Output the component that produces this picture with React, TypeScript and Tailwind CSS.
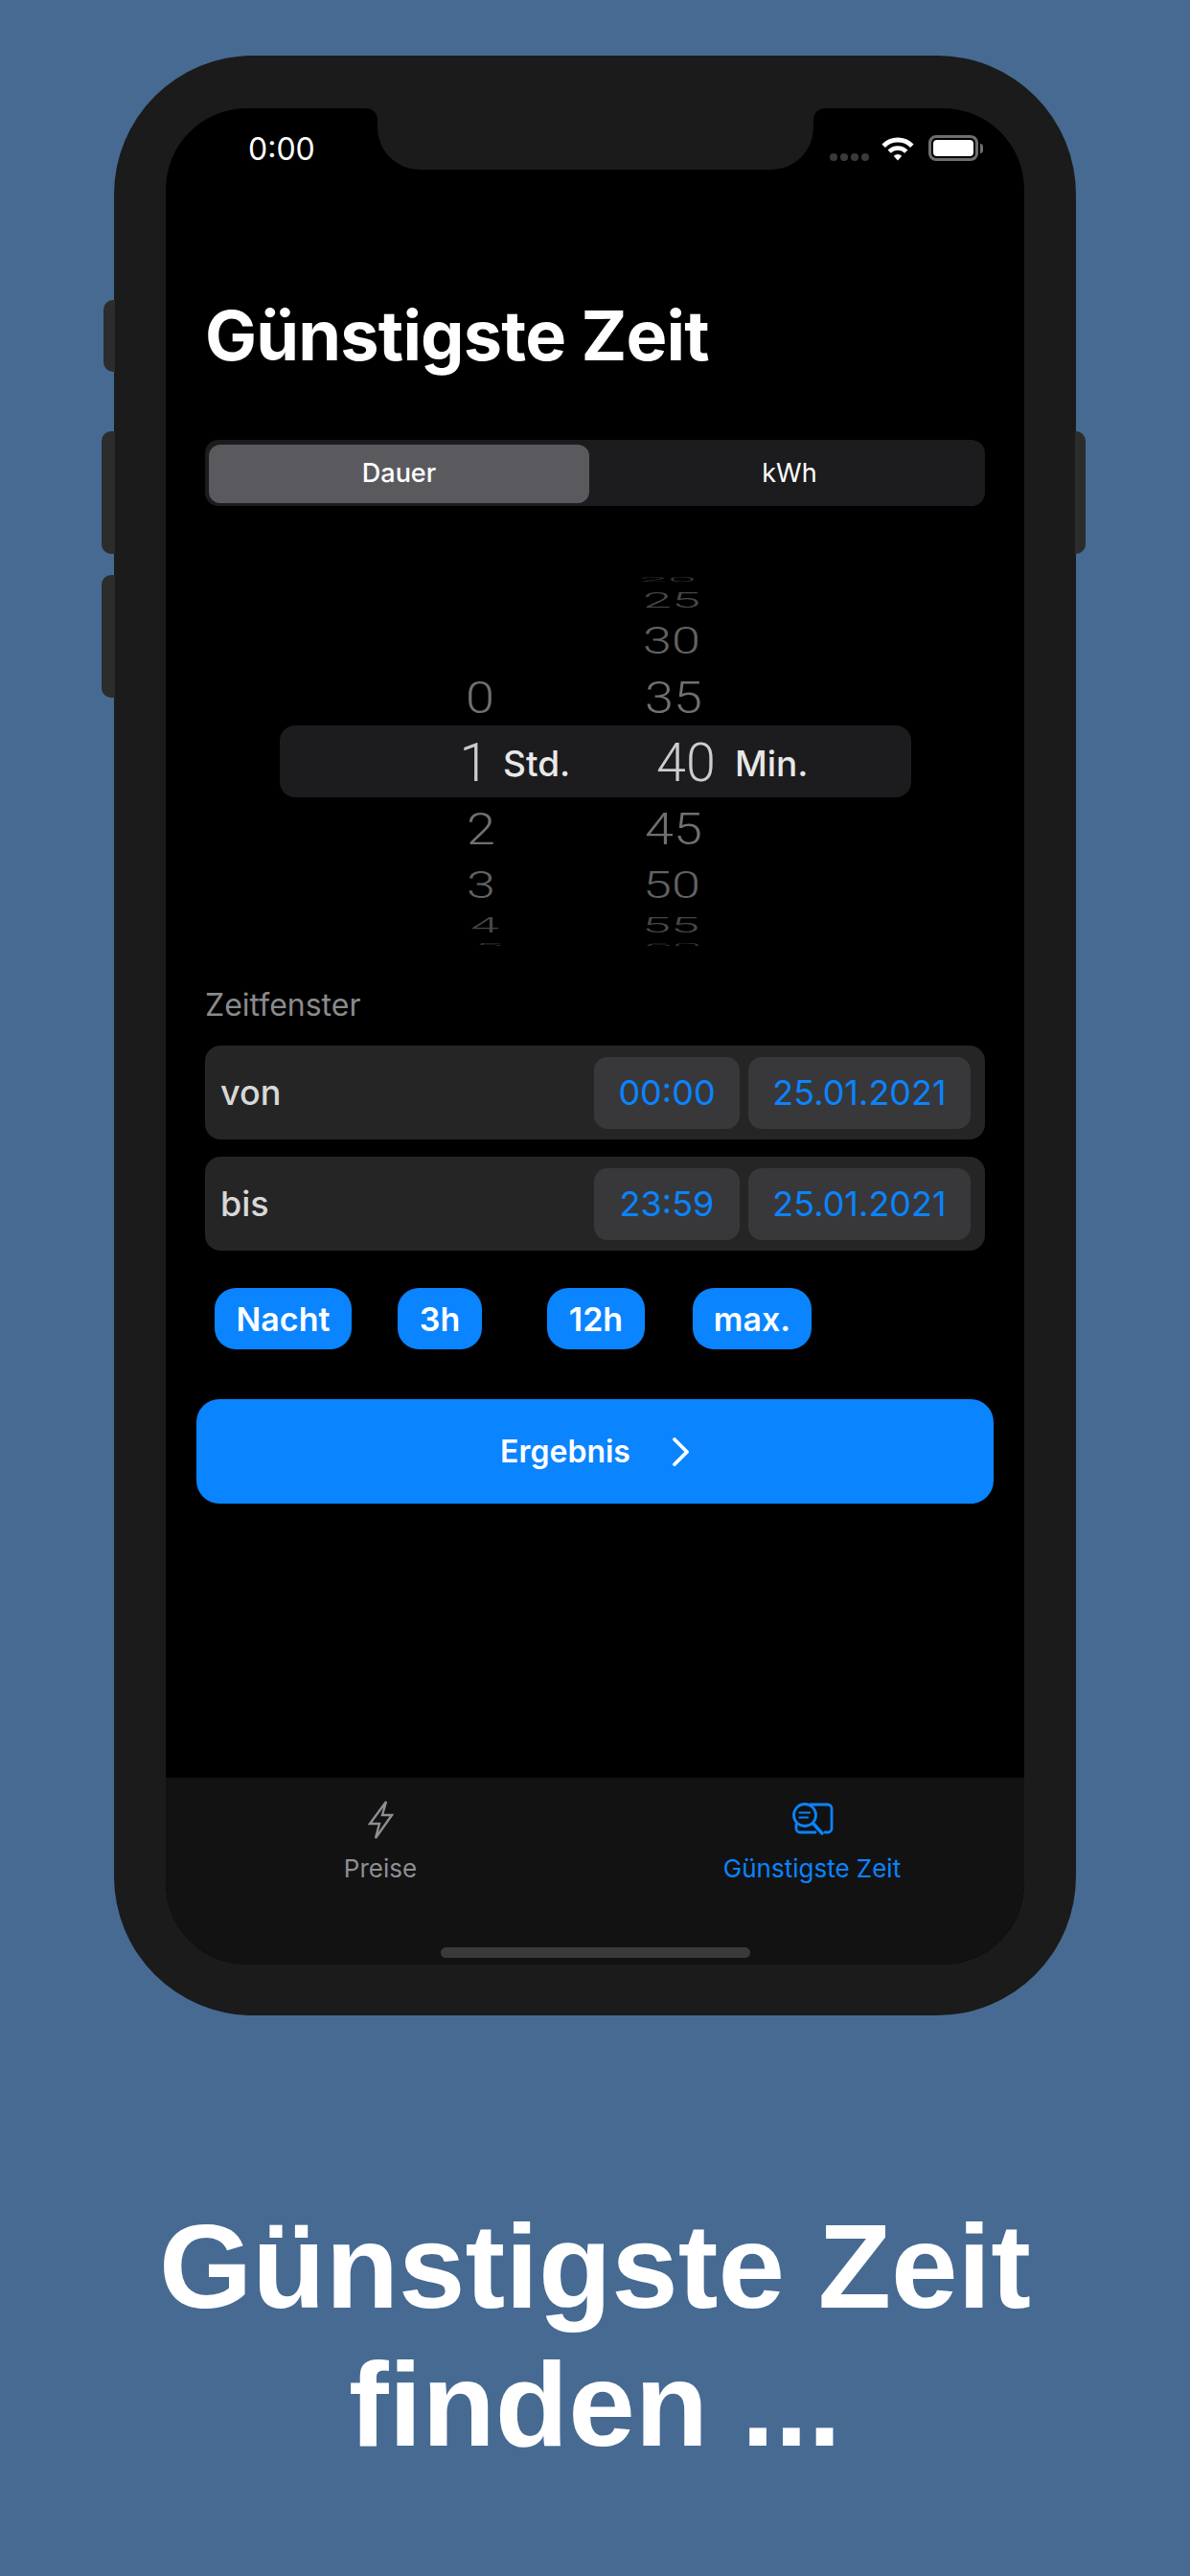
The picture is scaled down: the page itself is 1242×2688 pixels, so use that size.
const wheelRows = [
  { h: "h-[6px]", squash: "scale-y-[0.15]", color: "text-[#333333]", hour: "", hourShift: "", min: "20", minShift: "-translate-x-[4px]" },
  { h: "h-[38px]", squash: "scale-y-[0.42]", color: "text-[#484848]", hour: "", hourShift: "", min: "25", minShift: "" },
  { h: "h-[46px]", squash: "scale-y-[0.71]", color: "text-[#626262]", hour: "", hourShift: "", min: "30", minShift: "translate-x-[0px]" },
  { h: "h-[73px]", squash: "scale-y-[0.87]", color: "text-[#707070]", hour: "0", hourShift: "translate-x-[1px]", min: "35", minShift: "translate-x-[2px]" },
  { h: "h-[63px]", squash: "scale-[1.03]", color: "text-[#cccccc]", hour: "1", hourShift: "-translate-x-[5px]", min: "40", minShift: "translate-x-[15px]" },
  { h: "h-[74px]", squash: "scale-y-[0.87]", color: "text-[#707070]", hour: "2", hourShift: "translate-x-[2px]", min: "45", minShift: "translate-x-[2px]" },
  { h: "h-[44px]", squash: "scale-y-[0.71]", color: "text-[#626262]", hour: "3", hourShift: "translate-x-[2px]", min: "50", minShift: "translate-x-[0px]" },
  { h: "h-[40px]", squash: "scale-y-[0.42]", color: "text-[#484848]", hour: "4", hourShift: "translate-x-[6px]", min: "55", minShift: "-translate-x-[1px]" },
  { h: "h-[2px]", squash: "scale-y-[0.15]", color: "text-[#333333]", hour: "5", hourShift: "translate-x-[10px]", min: "60", minShift: "translate-x-[1px]" },
];

const timeRows = [
  { label: "von", time: "00:00", date: "25.01.2021" },
  { label: "bis", time: "23:59", date: "25.01.2021" },
];

const presets = [
  { label: "Nacht", cls: "ml-[10px] w-[143px]" },
  { label: "3h", cls: "ml-[48px] w-[88px]" },
  { label: "12h", cls: "ml-[68px] w-[102px]" },
  { label: "max.", cls: "ml-[50px] w-[124px]" },
];

function StatusIcons() {
  return (
    <div className="flex items-start pt-[29px] pl-[17px]">
      <div className="mt-[18px] flex gap-[3px]">
        <span className="h-[8px] w-[8px] rounded-full bg-[#3a3a3c]" />
        <span className="h-[8px] w-[8px] rounded-full bg-[#3a3a3c]" />
        <span className="h-[8px] w-[8px] rounded-full bg-[#3a3a3c]" />
        <span className="h-[8px] w-[8px] rounded-full bg-[#3a3a3c]" />
      </div>
      <svg className="ml-[12px]" width="36" height="26" viewBox="0 0 36 26" fill="none">
        <path d="M3.15 10.15A21 21 0 0 1 32.85 10.15" stroke="#fff" strokeWidth="5" />
        <path d="M9.16 16.16A12.5 12.5 0 0 1 26.84 16.16" stroke="#fff" strokeWidth="4.5" />
        <path d="M18 25.5 13.76 20.76A6 6 0 0 1 22.24 20.76Z" fill="#fff" />
      </svg>
      <div className="-mt-[1px] ml-[14px] flex items-center">
        <div className="h-[27px] w-[52px] rounded-[8px] border-[3px] border-[#6e6e70] p-[2px]">
          <div className="h-full w-full rounded-[4px] bg-white" />
        </div>
        <span className="ml-[2px] h-[10px] w-[3px] rounded-r-[3px] bg-[#6e6e70]" />
      </div>
    </div>
  );
}

function BoltIcon() {
  return (
    <svg width="27" height="42" viewBox="0 0 27 42" fill="none">
      <path d="M19 2 2 25h10L8 40 25 16H15Z" stroke="#8e8e93" strokeWidth="2.4" strokeLinejoin="miter" />
    </svg>
  );
}

function SearchDocIcon() {
  return (
    <svg width="44" height="34" viewBox="0 0 44 34" fill="none" stroke="#0a84ff" strokeWidth="2.8" strokeLinecap="round">
      <path d="M20 2H38a4 4 0 0 1 4 4V27a4 4 0 0 1-4 4H35" />
      <path d="M5 23V27a4 4 0 0 0 4 4H25" />
      <circle cx="14" cy="13" r="11.5" />
      <path d="M22.5 21.5 32 32" strokeWidth="3.4" />
      <path d="M8.5 10.5H19M8.5 15.5H17" strokeWidth="2.2" />
    </svg>
  );
}

function Wheel() {
  return (
    <div className="relative mt-[73px] h-[386px] overflow-hidden font-['Roboto',sans-serif] text-[54px] font-light">
      <div className="absolute top-[156px] left-[78px] flex h-[75px] w-[659px] items-center rounded-[16px] bg-[#1c1c1e] pt-[4px] font-['Inter',sans-serif] text-[37px] font-medium text-[#e8e8e8]">
        <span className="ml-[233px] w-[242px]">Std.</span>
        <span>Min.</span>
      </div>
      <div className="relative flex">
        <div className="ml-[236px] flex w-[100px] flex-col">
          {wheelRows.map((row, i) => (
            <div key={i} className={`flex items-center justify-center ${row.h} ${row.color}`}>
              <span className={`${row.squash} ${row.hourShift}`}>{row.hour}</span>
            </div>
          ))}
        </div>
        <div className="ml-[101px] flex w-[100px] flex-col">
          {wheelRows.map((row, i) => (
            <div key={i} className={`flex items-center justify-center ${row.h} ${row.color}`}>
              <span className={`${row.squash} ${row.minShift}`}>{row.min}</span>
            </div>
          ))}
        </div>
      </div>
    </div>
  );
}

export default function App() {
  return (
    <div className="h-[2688px] w-[1242px] overflow-hidden bg-[#476a92] font-['Inter',sans-serif]">
      <div className="relative mt-[58px] ml-[119px] h-[2045px] w-[1004px] rounded-[145px] bg-[#1b1b1b] px-[54px] pt-[55px]">
        <div className="absolute top-[255px] -left-[11px] h-[75px] w-[12px] rounded-l-[10px] bg-[#2c2c2c]" />
        <div className="absolute top-[392px] -left-[13px] h-[128px] w-[14px] rounded-l-[10px] bg-[#2c2c2c]" />
        <div className="absolute top-[542px] -left-[13px] h-[128px] w-[14px] rounded-l-[10px] bg-[#2c2c2c]" />
        <div className="absolute top-[392px] -right-[10px] h-[128px] w-[11px] rounded-r-[10px] bg-[#2c2c2c]" />

        <div className="flex h-[1937px] w-[896px] flex-col overflow-hidden rounded-[85px] bg-black">
          <div className="flex h-[64px] bg-[#1b1b1b]">
            <div className="w-[221px] rounded-tr-[12px] bg-black pt-[23px] pl-[86px] text-[32px] leading-[40px] text-white">0:00</div>
            <div className="w-[455px] bg-black">
              <div className="h-full rounded-b-[44px] bg-[#1b1b1b]" />
            </div>
            <div className="w-[220px] rounded-tl-[12px] bg-black">
              <StatusIcons />
            </div>
          </div>

          <div className="flex flex-1 flex-col px-[41px]">
            <h1 className="mt-[137px] text-[72px] leading-[72px] font-bold tracking-[-0.8px] text-white">Günstigste Zeit</h1>

            <div className="mt-[73px] flex h-[69px] items-center rounded-[14px] bg-[#1c1c1e] px-[4px] pt-[1px] text-[27px] text-white">
              <div className="flex h-[61px] w-[397px] items-center justify-center rounded-[12px] bg-[#5a5a5e] pt-[1px] font-medium">Dauer</div>
              <div className="flex flex-1 items-center justify-center pl-[9px]">kWh</div>
            </div>

            <Wheel />

            <div className="mt-[42px] text-[32px] leading-[40px] text-[#8a8a8e]">Zeitfenster</div>

            <div className="mt-[22px] flex flex-col gap-[18px]">
              {timeRows.map((row) => (
                <div key={row.label} className="flex h-[98px] items-center rounded-[16px] bg-[#252525] pr-[15px] pl-[16px]">
                  <span className="flex-1 text-[36px] font-medium text-[#d8d8d8]">{row.label}</span>
                  <span className="flex h-[75px] w-[152px] items-center justify-center rounded-[14px] bg-[#38383a] text-[36px] text-[#0a84ff]">{row.time}</span>
                  <span className="ml-[9px] flex h-[75px] w-[232px] items-center justify-center rounded-[14px] bg-[#38383a] text-[36px] text-[#0a84ff]">{row.date}</span>
                </div>
              ))}
            </div>

            <div className="mt-[39px] flex">
              {presets.map((p) => (
                <div key={p.label} className={`flex h-[64px] items-center justify-center rounded-[22px] bg-[#0a84ff] text-[34px] font-semibold text-white ${p.cls}`}>
                  {p.label}
                </div>
              ))}
            </div>

            <div className="-mx-[9px] mt-[52px] flex h-[109px] items-center justify-center rounded-[24px] bg-[#0a84ff] text-[32px] font-semibold text-white">
              Ergebnis
              <svg className="ml-[43px]" width="19" height="30" viewBox="0 0 19 30" fill="none">
                <path d="M3 2 16 15 3 28" stroke="#fff" strokeWidth="3.8" strokeLinecap="round" strokeLinejoin="round" />
              </svg>
            </div>
          </div>

          <div className="flex h-[195px] flex-col bg-[#121212]">
            <div className="grid grid-cols-2 text-[26px] leading-[32px]">
              <div className="flex flex-col items-center pt-[23px] text-[#8e8e93]">
                <BoltIcon />
                <span className="mt-[14px]">Preise</span>
              </div>
              <div className="flex flex-col items-center pt-[26px] pl-[5px] text-[#0a84ff]">
                <SearchDocIcon />
                <span className="mt-[19px]">Günstigste Zeit</span>
              </div>
            </div>
            <div className="mx-auto mt-auto mb-[7px] h-[11px] w-[323px] rounded-full bg-[#3a3a3a]" />
          </div>
        </div>
      </div>

      <div className="mt-[190px] text-center font-['Liberation_Sans',sans-serif] text-[125px] leading-[144px] font-bold text-white">
        Günstigste Zeit
        <br />
        finden ...
      </div>
    </div>
  );
}
